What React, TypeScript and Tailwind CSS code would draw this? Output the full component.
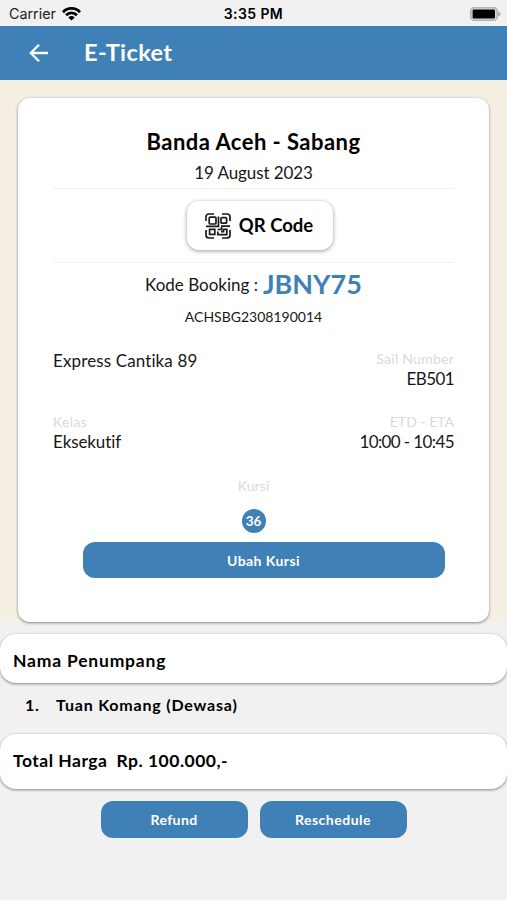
import React from 'react';

function Arrow() {
  return (
    <svg className="ml-[29px] h-[20px] w-[20px]" viewBox="0 0 20 20" fill="none" stroke="white" strokeWidth="2.3">
      <path d="M19 10H2M10 1.8L1.8 10L10 18.2" />
    </svg>
  );
}

function Wifi() {
  return (
    <svg className="ml-[6px] h-[14px] w-[19px]" viewBox="0 0 19 14" fill="none" stroke="black" strokeWidth="2.8">
      <path d="M1 5.2C5.6.2 13.4.2 18 5.2" />
      <path d="M4.1 8.3C7 5.1 12 5.1 14.9 8.3" />
      <path d="M9.5 13.6L6.3 10.4C8.1 8.6 10.9 8.6 12.7 10.4Z" fill="black" stroke="none" />
    </svg>
  );
}

function Battery() {
  return (
    <svg className="h-[14px] w-[31px]" viewBox="0 0 31 14">
      <rect x="0.8" y="0.8" width="26.4" height="12.4" rx="3.4" fill="#ddd" stroke="#b4b4b4" strokeWidth="1.6" />
      <rect x="2.6" y="2.6" width="22.4" height="8.8" rx="1.2" fill="#000" />
      <path d="M28.3 4.5Q30.5 5 30.5 7T28.3 9.5Z" fill="#a9a9a9" />
    </svg>
  );
}

function QrIcon() {
  return (
    <svg className="h-[26px] w-[26px]" viewBox="0 0 26 26" fill="none" stroke="#1b1b1b" strokeWidth="1.7">
      <path d="M1 8V4Q1 1 4 1H9M17 1H22Q25 1 25 4V8M1 17V22Q1 25 4 25H9M25 17V22Q25 25 22 25H17" />
      <rect x="4.2" y="4.2" width="6.8" height="6.8" rx="1" />
      <rect x="16" y="4.6" width="5.6" height="5.6" rx="1" />
      <path d="M4.6 16.3H9.8V21.4H4.6ZM1 13.3H13.5V3.5M16 13.2H25M12.5 16.5H16.5V14M12.8 18.5V21.6H21.8V16.3H18.5V18.7H16" />
    </svg>
  );
}

function Divider() {
  return <div className="h-px w-full shrink-0 bg-[#f3f1e6]" />;
}

export default function App() {
  return (
    <div className="flex h-[900px] w-full flex-col overflow-hidden bg-[#f1f1f1] font-[Lato,sans-serif] text-[#171717]">
      <div className="grid h-[26px] shrink-0 grid-cols-3 items-center pt-[1px] font-[Inter,sans-serif]">
        <div className="flex items-center pl-[9px] text-[14.3px] text-[#222]">
          Carrier
          <Wifi />
        </div>
        <div className="text-center text-[14px] font-semibold tracking-[0.4px] whitespace-nowrap text-black">3:35 PM</div>
        <div className="flex justify-end pr-[6px]">
          <Battery />
        </div>
      </div>

      <header className="flex h-[54px] shrink-0 items-center bg-[#3f80b6] text-white">
        <Arrow />
        <h1 className="ml-[35px] pb-[1px] text-[23.5px] leading-[53px] font-bold tracking-[0.4px]">E-Ticket</h1>
      </header>

      <main className="h-[541px] shrink-0 bg-[#f4eee3] px-[18px] pt-[18px]">
        <section className="flex h-[524px] flex-col items-center rounded-[12px] bg-white px-[35px] pt-[30px] shadow-[0_1px_3px_rgba(0,0,0,0.45)]">
          <h2 className="h-[28px] text-[22px] leading-[28px] font-bold tracking-[0.45px] text-black">Banda Aceh - Sabang</h2>
          <p className="mt-[4px] mb-[4px] h-[24px] text-[17px] leading-[25px] tracking-[-0.1px]">19 August 2023</p>
          <Divider />
          <button className="my-[12px] ml-[13px] flex h-[49px] w-[146px] shrink-0 items-center justify-center gap-[8px] rounded-[12px] bg-white pr-[2px] text-[18.5px] font-bold text-black shadow-[0_1px_4px_rgba(0,0,0,0.4)]">
            <QrIcon />
            QR Code
          </button>
          <Divider />
          <div className="mt-[7px] flex h-[30px] items-center gap-[5px] text-[17px]">
            <span>Kode Booking :</span>
            <span className="pb-[1px] text-[27px] font-bold text-[#3f80b6]">JBNY75</span>
          </div>
          <p className="mt-[6px] h-[20px] text-[14px] leading-[21px]">ACHSBG2308190014</p>

          <div className="mt-[24px] flex h-[38px] w-full justify-between text-[17px]">
            <span className="leading-[22px] tracking-[0.12px]">Express Cantika 89</span>
            <div className="text-right">
              <p className="h-[18px] text-[14px] leading-[18px] tracking-[0.25px] text-[#dadada]">Sail Number</p>
              <p className="leading-[22px] tracking-[-0.6px]">EB501</p>
            </div>
          </div>

          <div className="mt-[25px] flex h-[38px] w-full justify-between text-[17px]">
            <div>
              <p className="h-[18px] text-[14px] leading-[18px] tracking-[0.3px] text-[#dadada]">Kelas</p>
              <p className="leading-[22px] tracking-[-0.1px]">Eksekutif</p>
            </div>
            <div className="text-right">
              <p className="h-[18px] text-[14px] leading-[18px] text-[#dadada]">ETD - ETA</p>
              <p className="leading-[22px] tracking-[-0.6px]">10:00 - 10:45</p>
            </div>
          </div>

          <p className="mt-[26px] h-[18px] text-[14px] leading-[18px] tracking-[0.1px] text-[#dadada]">Kursi</p>
          <span className="mt-[14px] flex h-[24px] w-[24px] shrink-0 items-center justify-center rounded-full bg-[#3f80b6] text-[13.5px] font-bold text-white">
            36
          </span>
          <button className="mt-[9px] ml-[20px] h-[36px] w-[362px] shrink-0 rounded-[12px] bg-[#3f80b6] pt-[1px] text-[14px] font-bold tracking-[0.45px] text-white">
            Ubah Kursi
          </button>
        </section>
      </main>

      <section className="mt-[13px] flex h-[49px] shrink-0 items-center rounded-[16px] bg-white pt-[5px] pl-[13px] text-[17.5px] font-bold tracking-[0.8px] text-black shadow-[0_1px_3px_rgba(0,0,0,0.45)]">
        Nama Penumpang
      </section>
      <div className="flex h-[51px] shrink-0 items-center pb-[7px] pl-[25px] text-[16px] font-bold tracking-[0.8px] text-black">
        <span className="w-[31px]">1.</span>
        <span>Tuan Komang (Dewasa)</span>
      </div>
      <section className="flex h-[55px] shrink-0 items-center gap-[9px] rounded-[16px] bg-white pl-[13px] text-[17.5px] font-bold tracking-[0.5px] text-black shadow-[0_1px_3px_rgba(0,0,0,0.45)]">
        <span>Total Harga</span>
        <span>Rp. 100.000,-</span>
      </section>
      <div className="mt-[12px] flex justify-center gap-[12px]">
        <button className="h-[37px] w-[147px] rounded-[12px] bg-[#3f80b6] text-[14px] font-bold tracking-[0.4px] text-white">Refund</button>
        <button className="h-[37px] w-[147px] rounded-[12px] bg-[#3f80b6] text-[14px] font-bold tracking-[0.5px] text-white">Reschedule</button>
      </div>
    </div>
  );
}
